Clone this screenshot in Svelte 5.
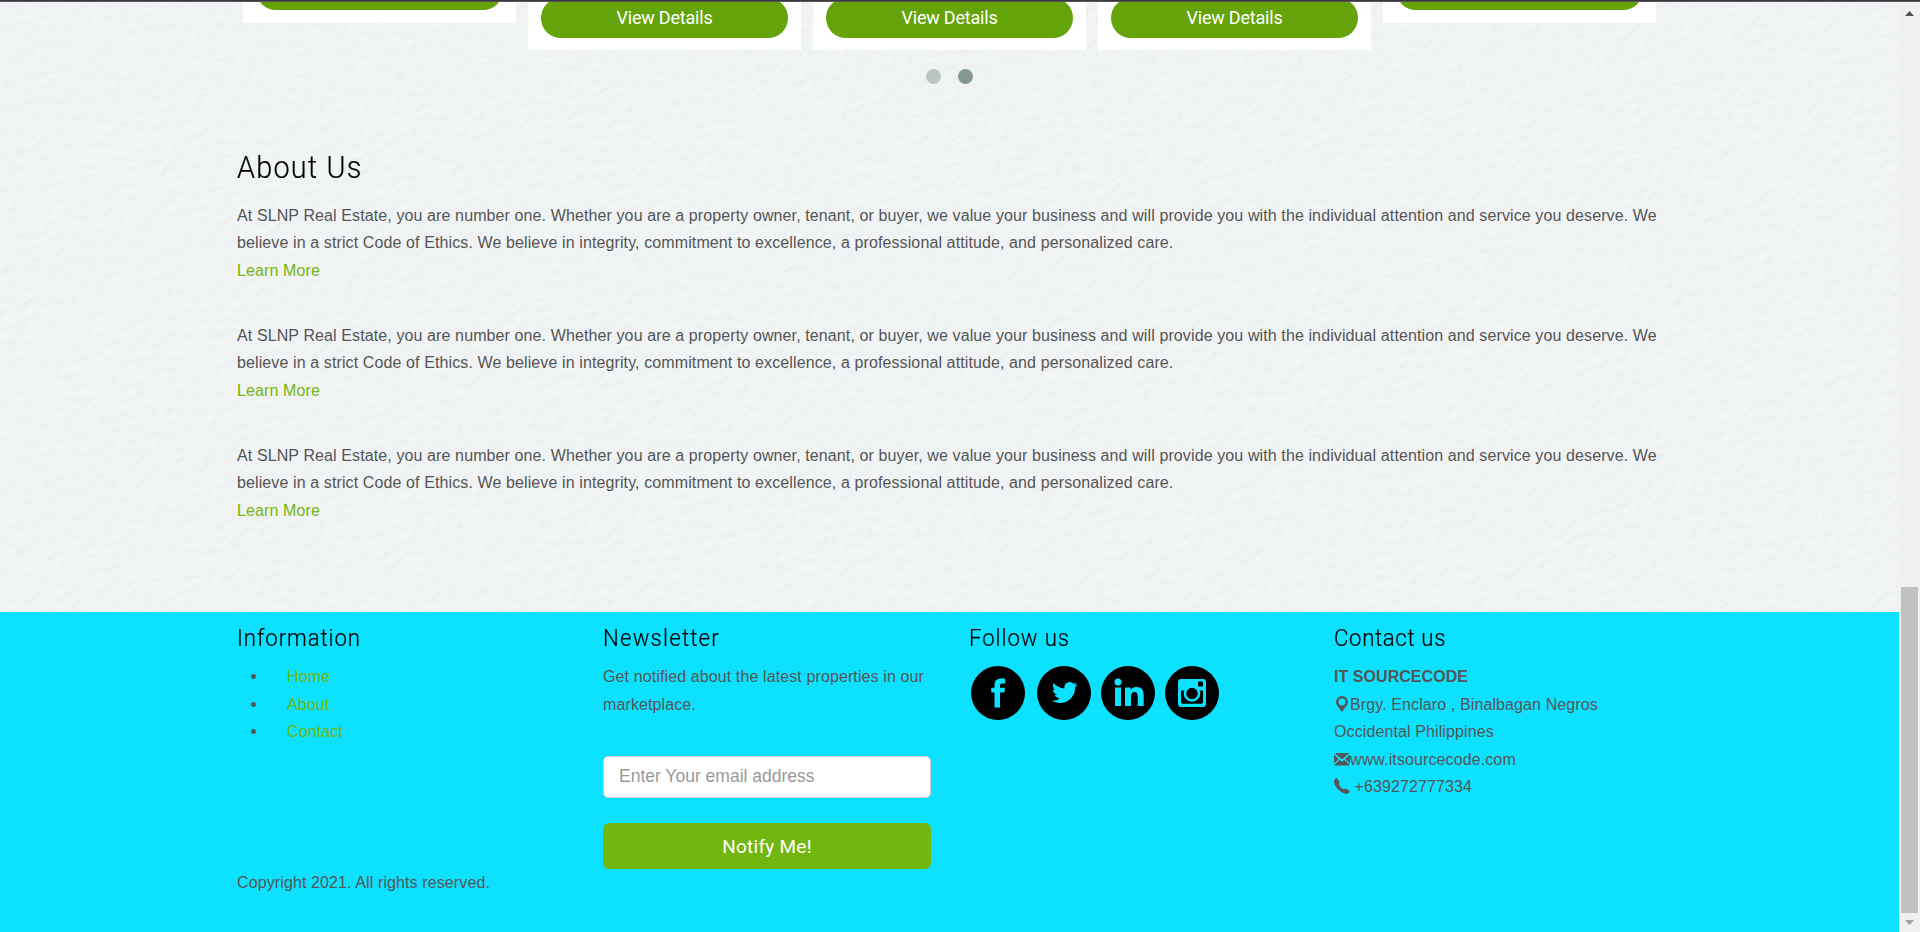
<script>
  const cards = [
    { short: true, label: '' },
    { short: false, label: 'View Details' },
    { short: false, label: 'View Details' },
    { short: false, label: 'View Details' },
    { short: true, label: '' }
  ];
  const paragraphs = [1, 2, 3];
</script>

<div class="screen">
  <div class="topline"></div>
  <div class="window">
    <div class="page">
      <svg class="paper" width="1899" height="610" aria-hidden="true">
        <filter id="grain" x="0" y="0" width="100%" height="100%" color-interpolation-filters="sRGB">
          <feTurbulence type="fractalNoise" baseFrequency="0.1 0.12" numOctaves="3" seed="8" result="n" />
          <feDiffuseLighting in="n" surfaceScale="1" diffuseConstant="1.08" lighting-color="#f1f4f5" result="l">
            <feDistantLight azimuth="235" elevation="68" />
          </feDiffuseLighting>
          <feColorMatrix in="l" type="matrix" values="0.14 0 0 0 0.81  0 0.14 0 0 0.819  0 0 0.14 0 0.823  0 0 0 1 0" />
        </filter>
        <rect width="1899" height="610" filter="url(#grain)" />
      </svg>
      <main>
        <div class="cards">
          {#each cards as card}
            <div class="card" class:short={card.short}>
              <button class="view">{card.label}</button>
            </div>
          {/each}
        </div>
        <div class="dots"><span></span><span class="on"></span></div>
        <h1><span>About Us</span></h1>
        {#each paragraphs as p}
          <p class="about">
            At SLNP Real Estate, you are number one. Whether you are a property owner, tenant, or buyer, we value your business and will provide you with the individual attention and service you deserve. We<br />
            believe in a strict Code of Ethics. We believe in integrity, commitment to excellence, a professional attitude, and personalized care.<br />
            <a href="#about">Learn More</a>
          </p>
        {/each}
      </main>
      <footer>
        <div class="cols">
          <section>
            <h4><span>Information</span></h4>
            <ul>
              <li><a href="#home">Home</a></li>
              <li><a href="#about">About</a></li>
              <li><a href="#contact">Contact</a></li>
            </ul>
          </section>
          <section>
            <h4 class="news"><span>Newsletter</span></h4>
            <p>Get notified about the latest properties in our<br />marketplace.</p>
            <input type="text" placeholder="Enter Your email address" />
            <button class="notify">Notify Me!</button>
          </section>
          <section>
            <h4><span>Follow us</span></h4>
            <div class="social">
              <svg width="54" height="54" viewBox="0 0 54 54"><circle cx="27" cy="27" r="27" /><path fill="#0ce1ff" d="M23.500 41.500V26.500h-3.300v-4.700h3.300v-2.500c0-4.800 2.300-6.800 6.500-6.800 2 0 3.700.1 4.200.3v4.700h-2.600c-2.100 0-2.600.8-2.600 2.400v1.900h5l-.6 4.700H29v15z" /></svg>
              <svg class="tw" width="54" height="54" viewBox="0 0 54 54"><circle cx="27" cy="27" r="27" /><path fill="#0ce1ff" d="M40.500 18.500c-.8.400-1.900.7-3 .8 1-.6 1.900-1.600 2.300-2.800-1 .6-2.100 1-3.300 1.200a5.300 5.300 0 0 0-9 4.800c-4.400-.2-8.200-2.300-10.800-5.500-1.400 2.500-.7 5.500 1.600 7-.8 0-1.700-.2-2.400-.6 0 2.500 1.800 4.700 4.200 5.200-.8.200-1.600.2-2.400.1.700 2.100 2.600 3.600 4.900 3.700-2.200 1.700-5 2.500-7.800 2.200 2.300 1.500 5.100 2.400 8.100 2.400 9.900 0 15.500-8.300 15.200-15.800 1-.7 1.800-1.600 2.400-2.700z" /></svg>
              <svg width="54" height="54" viewBox="0 0 54 54"><circle cx="27" cy="27" r="27" /><g fill="#0ce1ff"><circle cx="17" cy="16" r="3.500" /><path d="M14 21.500h6V40h-6zM24 21.500h5.700V24c1-1.700 3-2.900 5.600-2.900 5.700 0 7.400 3.400 7.400 8.600V40h-6v-9.200c0-2.500-.4-4.900-3.100-4.900s-3.600 2.100-3.600 4.900V40h-6z" /></g></svg>
              <svg width="54" height="54" viewBox="0 0 54 54"><circle cx="27" cy="27" r="27" /><rect x="13" y="13" width="28" height="28" rx="3" fill="#0ce1ff" /><rect x="33" y="15.500" width="5" height="5" rx=".8" /><path d="M16 24.500h3.200a8.300 8.300 0 1 0 15.600 0H38V36q0 1.800-1.800 1.800H17.800Q16 37.800 16 36z" /><circle cx="27" cy="27.500" r="5.700" /></svg>
            </div>
          </section>
          <section>
            <h4 class="reach"><span>Contact us</span></h4>
            <p class="contact">
              <b>IT SOURCECODE</b><br />
              <svg width="16" height="16" viewBox="0 0 16 16"><path fill-rule="evenodd" d="M8 0a6 6 0 0 1 6 6c0 3-3 5.500-6 10C5 11.500 2 9 2 6a6 6 0 0 1 6-6zm0 2.600a3.400 3.400 0 1 0 0 6.800 3.400 3.400 0 0 0 0-6.800z" /></svg>Brgy. Enclaro , Binalbagan Negros<br />
              Occidental Philippines<br />
              <svg width="16" height="16" viewBox="0 0 16 16"><path d="M.6 2h14.800L8 8.600zM0 3.400l4.800 4.500L0 12.600zM16 3.400v9.200l-4.800-4.700zM5.700 8.700 8 10.800l2.300-2.100 4.900 4.900v.9H.8v-.9z" /></svg>www.itsourcecode.com<br />
              <svg width="16" height="16" viewBox="0 0 16 16"><path d="M1 .9C2 0 3 .1 3.600.9l1.700 2.600c.5.800.2 1.600-.8 2.300.6 2 3 4.700 5.300 5.800 1-1.100 1.900-1.200 2.700-.7l2.400 1.700c.8.600.9 1.300.2 2-1 1.100-2.300 1.600-4.300 1C6 14.200 1.500 9.400.2 5.200-.2 3.300.1 1.800 1 .9z" /></svg> +639272777334
            </p>
          </section>
        </div>
        <p class="copy">Copyright 2021. All rights reserved.</p>
      </footer>
    </div>
    <div class="scrollbar">
      <svg width="9" height="5" viewBox="0 0 9 5"><path fill="#505050" d="M0 5L4.500 0 9 5z" /></svg>
      <div class="thumb"></div>
      <svg width="9" height="5" viewBox="0 0 9 5"><path fill="#a0a3a8" d="M0 0h9L4.500 5z" /></svg>
    </div>
  </div>
</div>

<style>
  :global(body) { overflow: hidden; }
  .screen {
    width: 1920px; height: 932px; overflow: hidden;
    display: flex; flex-direction: column;
    font: 16px/27.43px "Liberation Sans", Arial, sans-serif; color: #555;
    letter-spacing: .11px;
  }
  .topline { height: 2px; flex: none; background: linear-gradient(#3a363b 50%, #5a555c 50%); }
  .window { display: flex; height: 930px; }
  .page { width: 1899px; height: 930px; position: relative; overflow: hidden; background: #f0f3f4; }
  .paper { position: absolute; left: 0; top: 0; }
  main { position: relative; height: 610px; padding-left: 237px; box-sizing: border-box; }
  .cards { display: flex; gap: 12px; margin-left: 6px; height: 48px; align-items: flex-start; }
  .card { width: 273px; height: 48px; background: #fff; box-sizing: border-box; padding: 0 13px 12px; overflow: hidden; display: flex; align-items: flex-end; }
  .card.short { height: 21px; padding-bottom: 13px; }
  .view { flex: none; width: 247px; height: 40px; border: 0; border-radius: 20px; background: #65a30a; color: #fff; font: 18px/38px Roboto, sans-serif; letter-spacing: -.2px; padding: 0; }
  .dots { display: flex; gap: 17px; margin: 19px 0 0 689px; height: 15px; }
  .dots span { width: 15px; height: 15px; border-radius: 50%; background: #869791; opacity: .5; }
  .dots .on { opacity: 1; }
  h1 { margin: 64px 0 0; font: 300 31px/40px Roboto, sans-serif; color: #000; letter-spacing: 1.300px; height: 54px; -webkit-text-stroke: .2px #000; }
  h1 span { display: inline-block; transform: scaleX(.93); transform-origin: left; }
  .about { margin: 0 0 37.700px; white-space: nowrap; }
  a { color: #72b70f; text-decoration: none; }
  footer { height: 320px; background: #0ce1ff; padding-left: 237px; box-sizing: border-box; }
  .cols { display: flex; height: 256.500px; }
  section { width: 328px; margin-right: 38px; flex: none; }
  section:last-child { margin-left: -1px; }
  h4 { margin: 0; padding-top: 12px; height: 39.200px; font: 300 24px/28px Roboto, sans-serif; letter-spacing: 1px; color: #000; white-space: nowrap; -webkit-text-stroke: .2px #000; }
  h4 span { display: inline-block; transform: scaleX(.925); transform-origin: left; }
  .news { letter-spacing: 1.300px; }
  .reach { letter-spacing: .7px; }
  ul { margin: 0; padding: 0; list-style: none; }
  li { display: flex; align-items: center; padding-left: 14px; }
  li::before { content: ""; width: 5px; height: 5px; border-radius: 50%; background: #555; margin-right: 31px; }
  section p { margin: 0; white-space: nowrap; }
  b { letter-spacing: .05px; }
  input { display: block; width: 328px; height: 42px; margin: 37.900px 0 25px; box-sizing: border-box; border: 1px solid #ccc; border-radius: 5px; padding: 0 15px 1px; background: #fff; font: 17.500px "Liberation Sans", Arial, sans-serif; }
  input::placeholder { color: #999; opacity: 1; }
  .notify { display: block; width: 328px; height: 46px; border: 0; border-radius: 6px; background: #72b70f; color: #fff; font: 19px/47px Roboto, sans-serif; letter-spacing: .25px; padding: 0; }
  .social { display: flex; gap: 10px; padding: 3px 0 0 2px; }
  .social svg { flex: none; display: block; }
  .social .tw { margin-left: 2px; }
  .contact svg { fill: #555; vertical-align: -2px; }
  .copy { margin: 0; }
  .scrollbar { width: 21px; height: 930px; background: #f0f0f0; display: flex; flex-direction: column; align-items: center; padding-top: 9px; box-sizing: border-box; }
  .thumb { width: 17px; height: 326px; margin: 571px 1px 7px 0; background: #c1c1c1; flex: none; }
</style>
